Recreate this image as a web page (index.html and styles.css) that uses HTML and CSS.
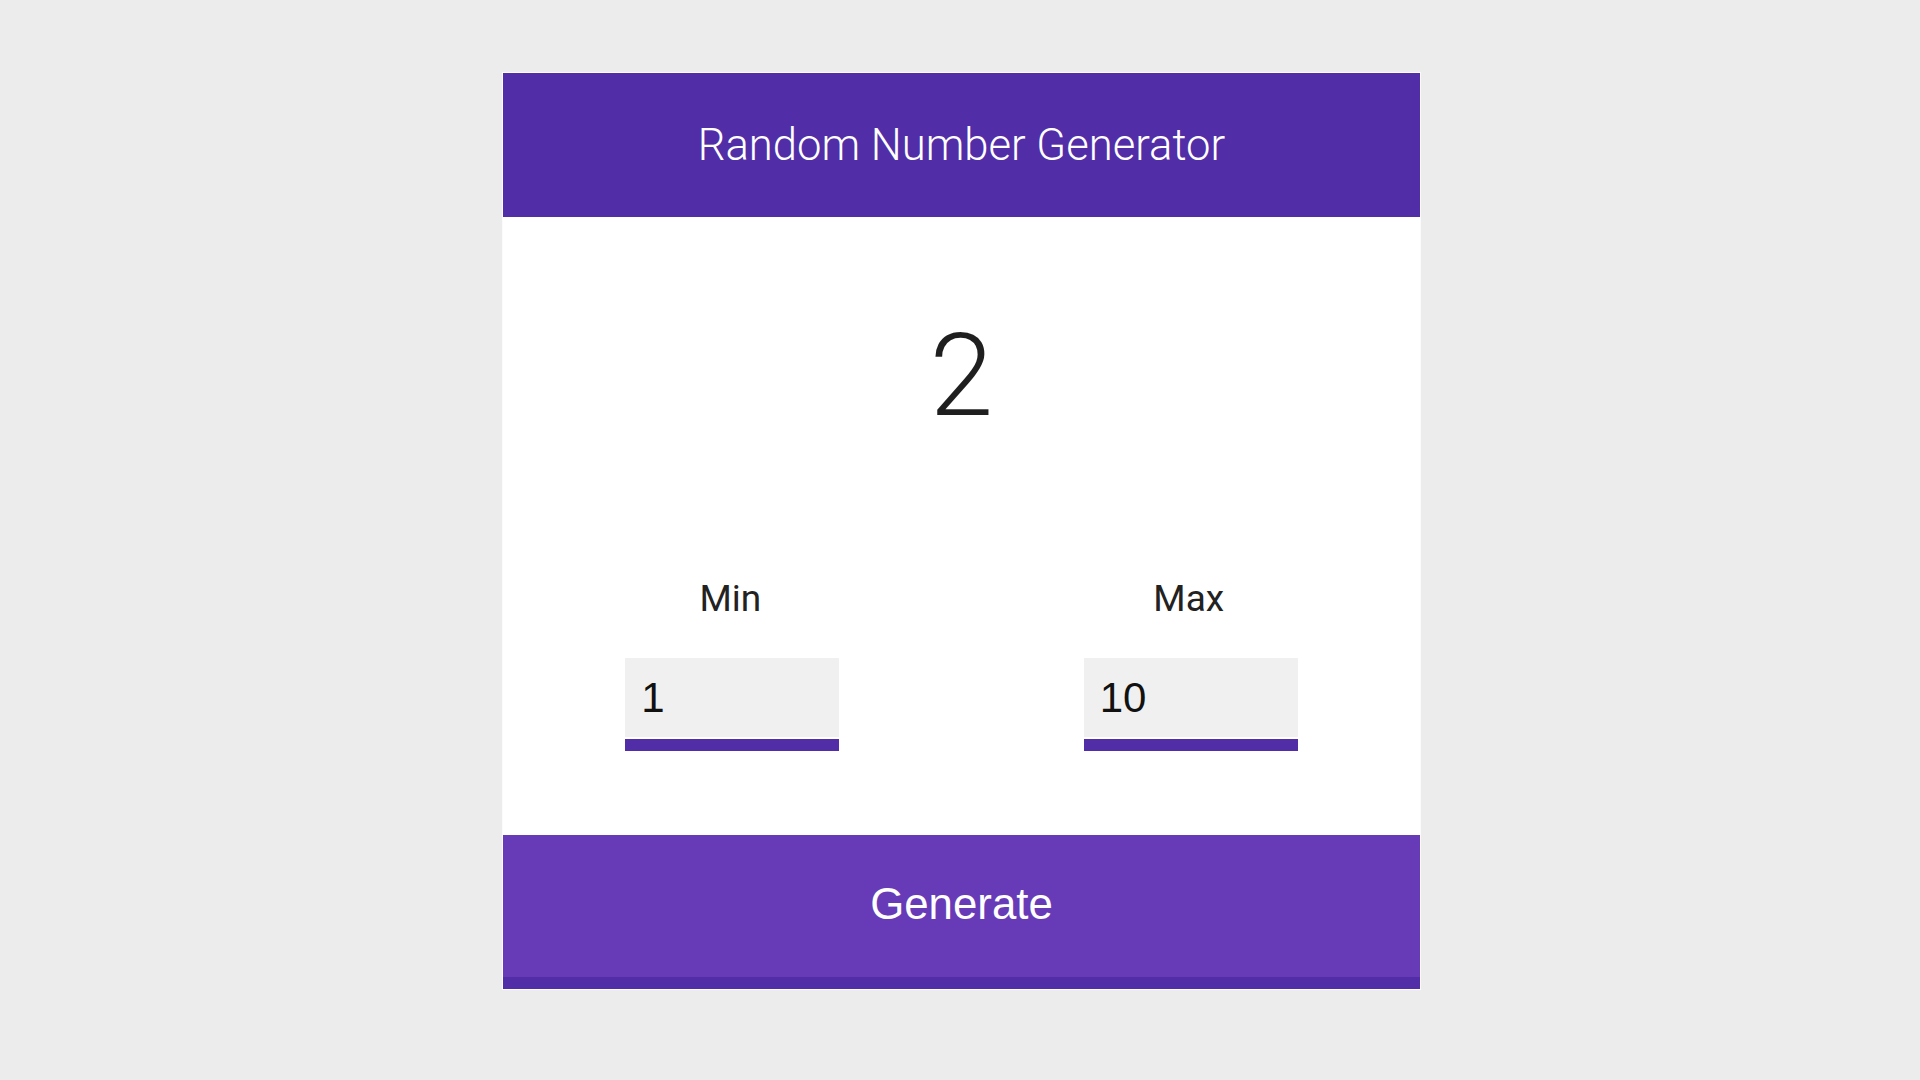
FILE: index.html
```html
<!DOCTYPE html>
<html lang="en">
<head>
<meta charset="utf-8">
<title>Random Number Generator</title>
<link rel="stylesheet" href="styles.css">
</head>
<body>
<div class="page">
  <div class="card">
    <header class="card-header">
      <h1 class="title">Random Number Generator</h1>
    </header>
    <div class="result">2</div>
    <div class="fields">
      <div class="field">
        <label class="field-label" for="min">Min</label>
        <input class="field-input" id="min" type="text" value="1">
      </div>
      <div class="field">
        <label class="field-label" for="max">Max</label>
        <input class="field-input" id="max" type="text" value="10">
      </div>
    </div>
    <button class="generate" type="button">Generate</button>
  </div>
</div>
</body>
</html>
```

FILE: styles.css
```css
html, body {
  margin: 0;
  padding: 0;
  background: #ececec;
}

.page {
  display: flex;
  justify-content: center;
  padding: 72px 0 0 3px;
}

.card {
  width: 917px;
  background: #ffffff;
  border: 1px solid #fbfbfb;
  display: flex;
  flex-direction: column;
}

.card-header {
  height: 144px;
  background: #512da8;
  display: flex;
  align-items: center;
  justify-content: center;
}

.title {
  margin: 0;
  font-family: Roboto, "Liberation Sans", sans-serif;
  font-weight: 300;
  font-size: 43.6px;
  color: #ffffff;
}

.result {
  height: 316px;
  display: flex;
  align-items: center;
  justify-content: center;
  font-family: Roboto, "Liberation Sans", sans-serif;
  font-weight: 300;
  font-size: 115px;
  color: #1f1f1f;
}

.fields {
  display: grid;
  grid-template-columns: 1fr 1fr;
  padding-top: 43px;
  padding-bottom: 84px;
}

.field {
  display: flex;
  flex-direction: column;
  align-items: center;
  gap: 37px;
}

.field-label {
  font-family: Roboto, "Liberation Sans", sans-serif;
  font-size: 37px;
  color: #222222;
  line-height: 45px;
  margin-right: 4px;
}

.field-input {
  box-sizing: border-box;
  width: 214px;
  height: 93px;
  margin: 0;
  padding: 0 0 2px 16px;
  border: 0;
  border-bottom: 12px solid #512da8;
  box-shadow: inset 0 -2px 0 #ffffff;
  background: #f0f0f0;
  font-family: "Liberation Sans", Arial, sans-serif;
  font-size: 42px;
  color: #111111;
  outline: none;
}

.generate {
  display: block;
  width: 100%;
  height: 154px;
  margin: 0;
  padding: 0 0 4px 0;
  border: 0;
  border-bottom: 12px solid #512da8;
  background: #673ab7;
  font-family: "Liberation Sans", Arial, sans-serif;
  font-size: 43.8px;
  color: #ffffff;
  cursor: pointer;
}
```
